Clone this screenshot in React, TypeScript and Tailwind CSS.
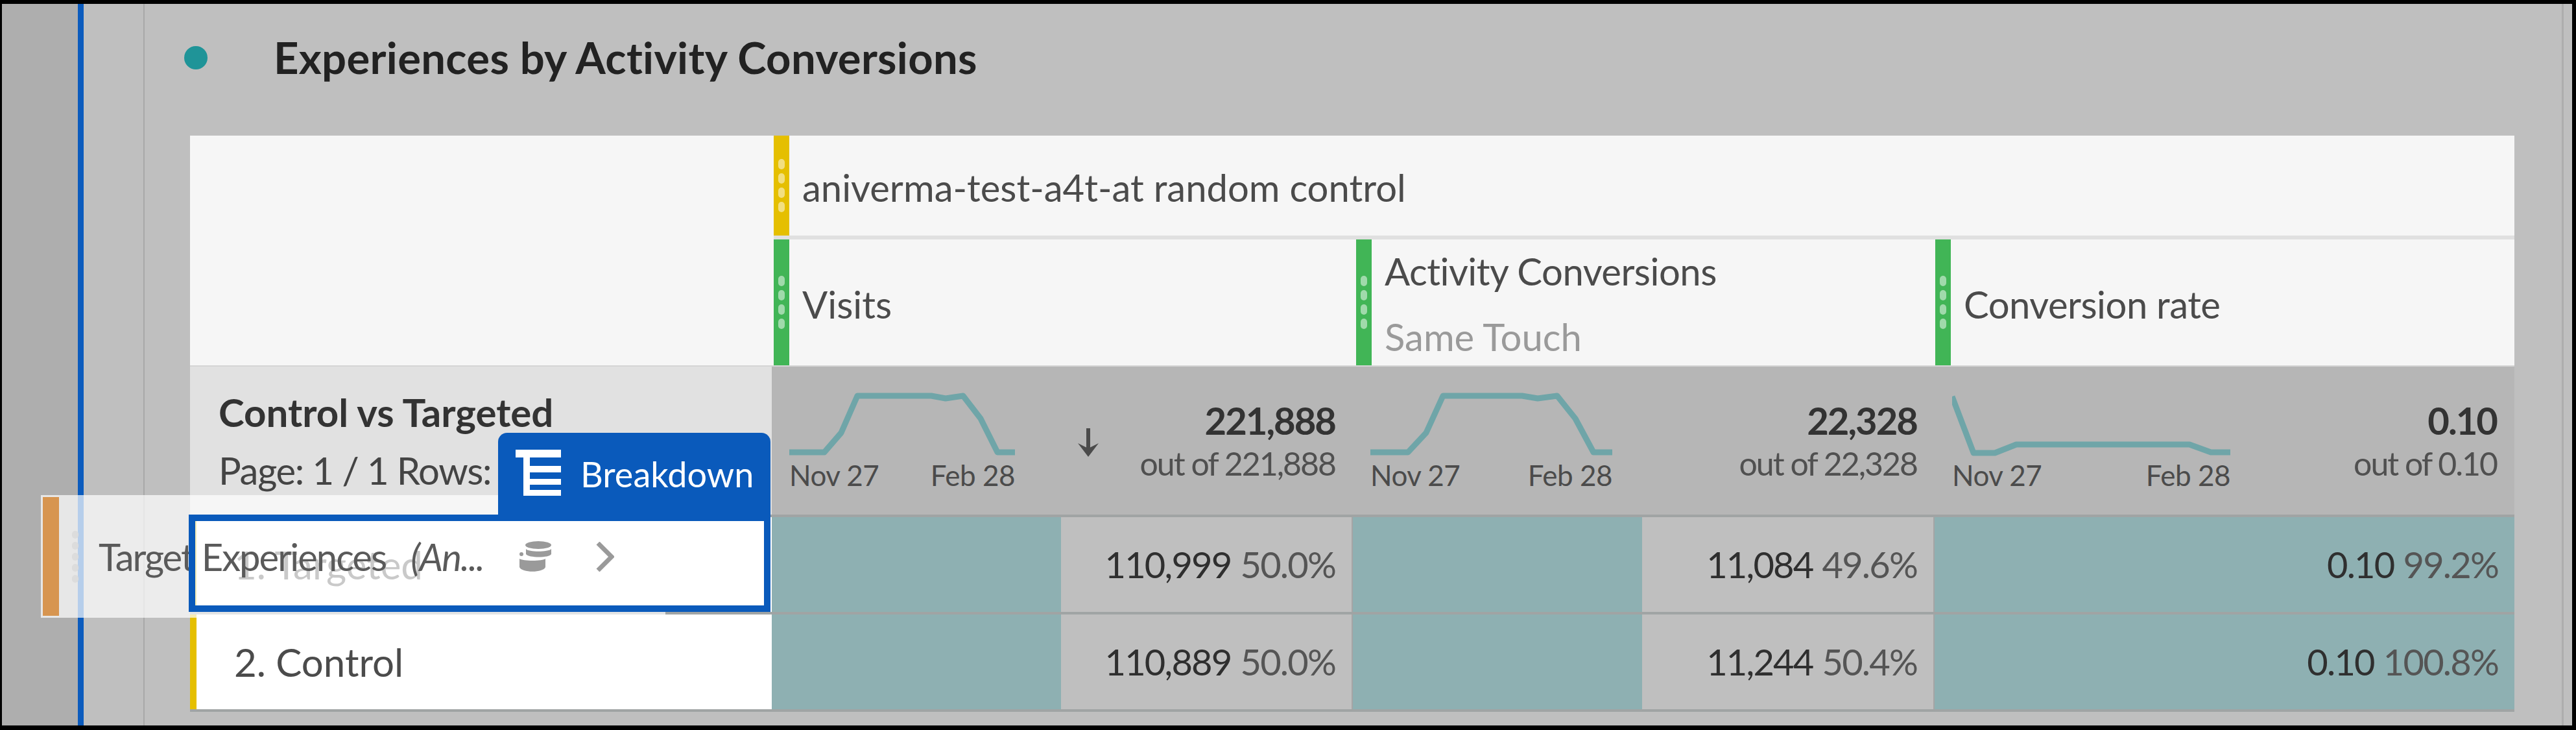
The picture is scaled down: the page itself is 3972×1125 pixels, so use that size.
const font = "font-['Lato','Open_Sans',sans-serif]";

const Dots = () => (
  <div className="flex flex-col gap-[6px]">
    {[0, 1, 2, 3].map((i) => (
      <span key={i} className="w-[10px] h-[16px] rounded-full bg-white/50" />
    ))}
  </div>
);

const Strip = ({ color }: { color: string }) => (
  <div className={`w-[24px] shrink-0 self-stretch flex items-center justify-center ${color}`}>
    <Dots />
  </div>
);

const Spark = ({ points, width }: { points: string; width: number }) => (
  <svg width={width} height={100} viewBox={`0 0 ${width} 100`} className="block">
    <polyline points={points} fill="none" stroke="#6fa5a8" strokeWidth={9} strokeLinejoin="round" />
  </svg>
);

const SummaryCell = ({
  points,
  sparkWidth,
  value,
  total,
  arrow,
  className,
}: {
  points: string;
  sparkWidth: number;
  value: string;
  total: string;
  arrow?: boolean;
  className: string;
}) => (
  <div className={`flex items-start justify-between pl-[27px] pr-[27px] pt-[40px] relative ${className}`}>
    <div style={{ width: sparkWidth }}>
      <Spark points={points} width={sparkWidth} />
      <div className="flex justify-between text-[44px] leading-[50px] tracking-[-0.5px] text-[#4b4b4b] mt-[2px]">
        <span>Nov 27</span>
        <span>Feb 28</span>
      </div>
    </div>
    {arrow && (
      <svg width="36" height="46" viewBox="0 0 36 46" className="absolute left-[470px] top-[94px]">
        <path d="M18 1v36" stroke="#4b4b4b" strokeWidth="6" fill="none" />
        <path d="M2 24l16 21 16-21-16 8z" fill="#4b4b4b" />
      </svg>
    )}
    <div className="text-right mt-[10px]">
      <div className="text-[58px] leading-[66px] font-bold tracking-[-2px] text-[#333]">{value}</div>
      <div className="text-[50px] leading-[66px] tracking-[-2px] text-[#505050]">{total}</div>
    </div>
  </div>
);

const DataCell = ({ value, pct, wide, className }: { value: string; pct: string; wide?: boolean; className: string }) => (
  <div className={`flex border-r-[2px] border-[#a5a5a5] last:border-r-0 ${className}`}>
    {!wide && <div className="w-[446px] bg-[#8eb0b2]" />}
    <div
      className={`flex-1 flex items-center justify-end gap-[14px] pr-[25px] text-[56px] tracking-[-1.8px] ${
        wide ? "bg-[#8eb0b2]" : "bg-[#bfbfbf]"
      }`}
    >
      <span className="text-[#2f2f2f]">{value}</span>
      <span className="text-[#555]">{pct}</span>
    </div>
  </div>
);

const DataRow = ({ label, accent, cells }: { label: string; accent: string; cells: [string, string][] }) => (
  <div className="flex h-[150px] border-b-[4px] border-[#a0a4a4]">
    <div className={`w-[897px] bg-white flex items-center border-l-[10px] pl-[58px] text-[60px] text-[#4b4b4b] ${accent}`}>
      {label}
    </div>
    <DataCell className="w-[896px]" value={cells[0][0]} pct={cells[0][1]} />
    <DataCell className="w-[897px]" value={cells[1][0]} pct={cells[1][1]} />
    <DataCell className="flex-1" value={cells[2][0]} pct={cells[2][1]} wide />
  </div>
);

const BreakdownIcon = () => (
  <svg width="70" height="72" viewBox="0 0 70 72" fill="#fff">
    <rect x="0" y="0" width="70" height="12" />
    <rect x="12" y="0" width="10" height="71" />
    <rect x="12" y="25" width="58" height="10" />
    <rect x="12" y="45" width="58" height="9" />
    <rect x="12" y="62" width="58" height="9" />
  </svg>
);

// stacked-cylinder glyph on the dragged dimension
const StackIcon = () => (
  <svg width="50" height="48" viewBox="0 0 50 48" fill="#9a9a9a">
    <ellipse cx="29" cy="6" rx="20" ry="6" />
    <path d="M10 12c4 5 34 5 39 0v8c-3 6-35 6-39 0z" />
    <circle cx="3" cy="20" r="3" />
    <path d="M0 27c5 4 36 4 40 0v13c-3 9-37 9-40 0z" />
  </svg>
);

export default function App() {
  return (
    <div className={`w-[3972px] h-[1125px] bg-black pt-[6px] pb-[7px] pl-[3px] pr-[6px] overflow-hidden ${font}`}>
      <div className="relative flex h-full">
        <div className="w-[117px] shrink-0 bg-[#aeaeae]" />
        <div className="w-[9px] shrink-0 bg-[#0b5bbd]" />
        <div className="flex-1 min-w-0 bg-[#bfbfbf] flex">
          <div className="w-[94px] shrink-0 border-r-[2px] border-[#a8a8a8]" />
          <div className="w-[70px] shrink-0" />
          <div className="w-[3584px] shrink-0">
            <div className="flex items-center h-[203px] pb-[38px]">
              <span className="w-[36px] h-[36px] rounded-full bg-[#1f9498] ml-[-9px]" />
              <h1 className="ml-[102px] text-[67px] font-bold tracking-[0.3px] text-[#222]">
                Experiences by Activity Conversions
              </h1>
            </div>

            {/* header rows */}
            <div className="flex bg-[#f6f6f6] h-[356px] border-b-[2px] border-[#d5d5d5]">
              <div className="w-[900px] shrink-0" />
              <div className="flex-1 flex flex-col">
                <div className="flex h-[154px]">
                  <Strip color="bg-[#e5bf00]" />
                  <div className="flex items-center pl-[20px] pt-[4px] text-[58px] text-[#4b4b4b]">
                    aniverma-test-a4t-at random control
                  </div>
                </div>
                <div className="h-[6px] bg-[#e0e0e0]" />
                <div className="flex flex-1">
                  <div className="w-[898px] flex">
                    <Strip color="bg-[#41b556]" />
                    <div className="flex items-center pl-[20px] pt-[4px] text-[58px] text-[#4b4b4b]">Visits</div>
                  </div>
                  <div className="w-[893px] flex">
                    <Strip color="bg-[#41b556]" />
                    <div className="flex flex-col justify-center gap-[26px] pl-[20px] pt-[3px] text-[58px] leading-[75px] text-[#4b4b4b]">
                      <span className="tracking-[-0.5px]">Activity Conversions</span>
                      <span className="text-[#9a9a9a]">Same Touch</span>
                    </div>
                  </div>
                  <div className="flex-1 flex">
                    <Strip color="bg-[#41b556]" />
                    <div className="flex items-center pl-[20px] pt-[4px] text-[58px] tracking-[-0.5px] text-[#4b4b4b]">Conversion rate</div>
                  </div>
                </div>
              </div>
            </div>

            {/* summary row */}
            <div className="flex h-[232px] border-b-[4px] border-[#a0a4a4]">
              <div className="w-[897px] shrink-0 bg-[#e1e1e1] pl-[44px] pt-[34px] text-[#444]">
                <div className="text-[60px] leading-[72px] font-bold text-[#333]">Control vs Targeted</div>
                <div className="text-[58px] leading-[72px] mt-[18px] tracking-[-1.3px]">Page: 1 / 1 Rows:</div>
              </div>
              <div className="flex-1 flex bg-[#b6b6b6]">
                <SummaryCell
                  arrow
                  className="w-[896px]"
                  sparkWidth={348}
                  value="221,888"
                  total="out of 221,888"
                  points="0,92 54,92 80,62 105,5 219,5 241,9 268,5 295,40 321,92 348,92"
                />
                <SummaryCell
                  className="w-[897px]"
                  sparkWidth={373}
                  value="22,328"
                  total="out of 22,328"
                  points="0,92 58,92 86,62 112,5 234,5 258,9 288,5 316,40 344,92 373,92"
                />
                <SummaryCell
                  className="flex-1"
                  sparkWidth={429}
                  value="0.10"
                  total="out of 0.10"
                  points="0,6 33,93 66,93 99,80 366,80 399,92 429,92"
                />
              </div>
            </div>

            <DataRow
              label="1. Targeted"
              accent="border-[#e5bf00]"
              cells={[
                ["110,999", "50.0%"],
                ["11,084", "49.6%"],
                ["0.10", "99.2%"],
              ]}
            />
            <DataRow
              label="2. Control"
              accent="border-[#e5bf00]"
              cells={[
                ["110,889", "50.0%"],
                ["11,244", "50.4%"],
                ["0.10", "100.8%"],
              ]}
            />
          </div>
          <div className="w-[73px] shrink-0" />
          <div className="w-[3px] shrink-0 bg-[#adadad]" />
        </div>

        {/* dragged dimension, lying over the table */}
        <div className="absolute left-[60px] top-[757px] w-[963px] h-[189px] bg-white/70 flex items-center pl-[3px] py-[3px]">
          <div className="w-[25px] self-stretch bg-[#d79550]" />
          <div className="ml-[20px] flex flex-col gap-[5px]">
            {[0, 1, 2, 3, 4].map((i) => (
              <span key={i} className="w-[10px] h-[12px] rounded-full bg-[#dcdcdc]" />
            ))}
          </div>
          <span className="ml-[31px] text-[58px] tracking-[-2px] text-[#5a5a5a]">Target Experiences</span>
          <em className="ml-[38px] text-[58px] tracking-[-1.7px] text-[#5a5a5a]">(An...</em>
          <span className="ml-[55px]">
            <StackIcon />
          </span>
          <svg width="28" height="46" viewBox="0 0 28 46" fill="none" stroke="#9a9a9a" strokeWidth="7" className="ml-[68px]">
            <path d="M3 2l21 21-21 21" />
          </svg>
        </div>

        {/* drop target */}
        <div className="absolute left-[288px] top-[787px] w-[897px] h-[150px] border-[10px] border-[#0a5abb]" />
        <div className="absolute left-[765px] top-[661px] w-[420px] h-[127px] bg-[#0a5abb] rounded-t-[14px] flex items-start pl-[27px] pt-[26px] gap-[30px]">
          <BreakdownIcon />
          <span className="text-[54px] leading-[70px] mt-[3px] text-white">Breakdown</span>
        </div>
      </div>
    </div>
  );
}
